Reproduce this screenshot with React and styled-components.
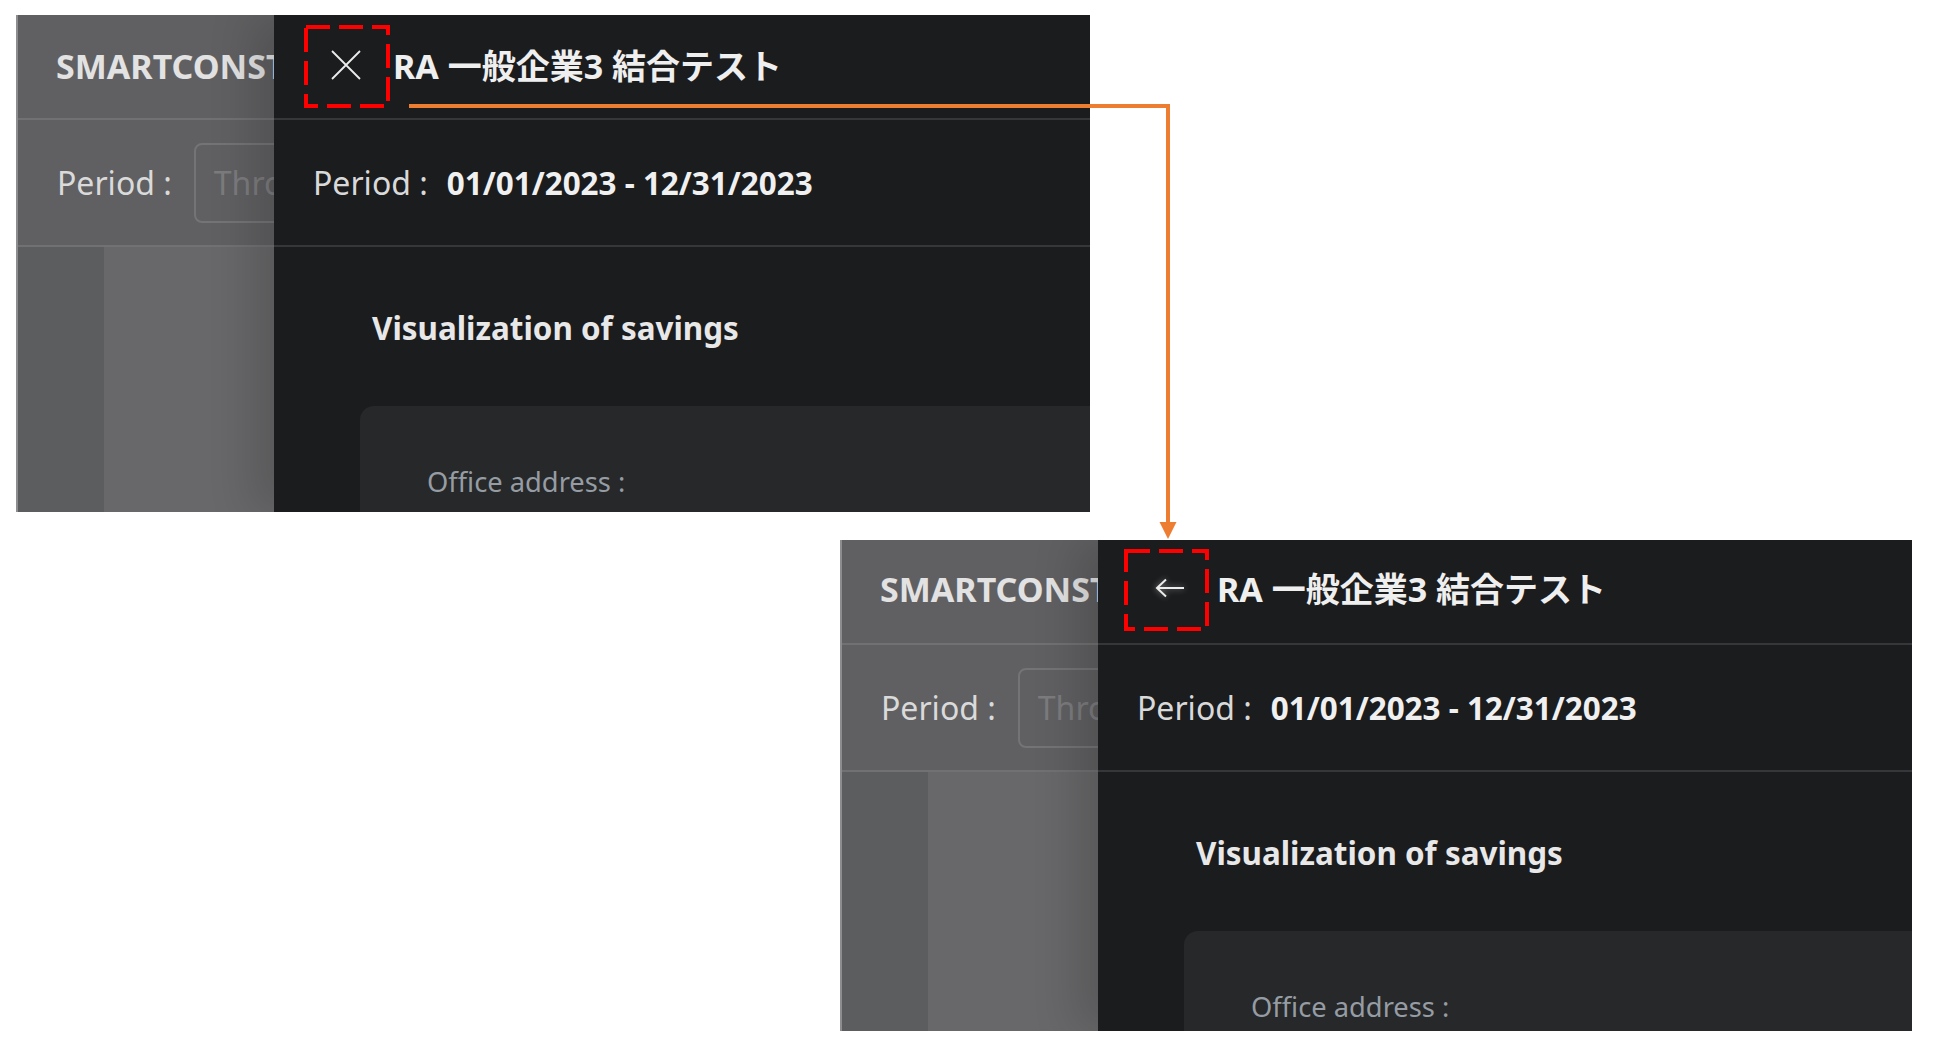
import React from "react";
import styled, { createGlobalStyle } from "styled-components";

const GlobalStyle = createGlobalStyle`
  html, body {
    margin: 0;
    padding: 0;
    background: #ffffff;
  }
  body {
    font-family: "Noto Sans", "Noto Sans CJK JP", sans-serif;
  }
`;

const FONT = `"Noto Sans", "Noto Sans CJK JP", sans-serif`;

const Page = styled.div`
  position: relative;
  width: 1939px;
  height: 1057px;
  box-sizing: border-box;
  padding: 15px 0 0 16px;
  display: flex;
  flex-direction: column;
  align-items: flex-start;
  overflow: hidden;
`;

const Shot = styled.div`
  position: relative;
  width: ${(p) => p.$w}px;
  height: ${(p) => p.$h}px;
  margin-left: ${(p) => p.$left || 0}px;
  margin-top: ${(p) => p.$top || 0}px;
  overflow: hidden;
  border-left: 2px solid #8d8d8f;
  box-sizing: border-box;
  background: #606062;
  font-family: ${FONT};
`;

/* ---------- the page behind the drawer ---------- */

const Behind = styled.div`
  display: flex;
  flex-direction: column;
  height: 100%;
`;

const BehindHeader = styled.div`
  height: 105px;
  box-sizing: border-box;
  padding-bottom: ${(p) => p.$lift}px;
  flex: none;
  display: flex;
  align-items: center;
  padding-left: 38px;
  border-bottom: 2px solid #717173;
  color: #e2e2e2;
  font-size: 34px;
  font-weight: 700;
  white-space: nowrap;
`;

const BehindPeriod = styled.div`
  height: 125px;
  flex: none;
  display: flex;
  align-items: center;
  gap: 22px;
  padding-left: 39px;
  border-bottom: 2px solid #717173;
  color: #dadada;
  font-size: 32px;
  white-space: nowrap;
`;

const FakeInput = styled.div`
  height: 80px;
  width: 320px;
  box-sizing: border-box;
  border: 2px solid #747476;
  border-radius: 8px;
  display: flex;
  align-items: center;
  padding-left: 18px;
  color: #7c7c7e;
  font-size: 32px;
`;

const BehindBody = styled.div`
  flex: 1;
  display: flex;
`;

const SideStrip = styled.div`
  width: 86px;
  background: #5c5d5f;
`;

const MainArea = styled.div`
  flex: 1;
  background: #68686a;
`;

/* ---------- the drawer ---------- */

const Drawer = styled.div`
  position: absolute;
  top: 0;
  bottom: 0;
  left: 256px;
  right: 0;
  background: #1b1c1e;
  box-shadow: -24px 0 40px rgba(0, 0, 0, 0.14);
  display: flex;
  flex-direction: column;
`;

const DrawerHeader = styled.div`
  position: relative;
  height: 105px;
  box-sizing: border-box;
  padding-bottom: ${(p) => p.$lift}px;
  flex: none;
  display: flex;
  align-items: center;
  padding-left: 56px;
  gap: 31px;
  border-bottom: 2px solid #36373a;
`;

const IconButton = styled.div`
  width: 32px;
  height: 32px;
  display: flex;
  align-items: center;
  justify-content: center;
  color: #ececec;
  filter: ${(p) => (p.$glow ? "drop-shadow(0 0 3px rgba(255,255,255,0.45))" : "none")};
`;

const Title = styled.div`
  color: #efefef;
  font-size: 34px;
  font-weight: 700;
  white-space: nowrap;
`;

const PeriodRow = styled.div`
  height: 125px;
  flex: none;
  display: flex;
  align-items: center;
  padding-left: 39px;
  border-bottom: 2px solid #36373a;
  white-space: nowrap;
`;

const PeriodLabel = styled.span`
  color: #d9d9d9;
  font-size: 32px;
`;

const PeriodValue = styled.span`
  margin-left: 19px;
  color: #f0f0f0;
  font-size: 31.4px;
  font-weight: 700;
`;

const Content = styled.div`
  flex: 1;
  padding-left: 86px;
  display: flex;
  flex-direction: column;
`;

const SectionTitle = styled.div`
  margin-top: 59px;
  padding-left: 12px;
  line-height: 44px;
  color: #e8e8e8;
  font-size: 31.4px;
  font-weight: 700;
`;

const Card = styled.div`
  margin-top: 56px;
  flex: 1;
  background: #27282a;
  border-radius: 14px 0 0 0;
  padding: 58px 0 0 67px;
`;

const FieldLabel = styled.div`
  line-height: 36px;
  color: #959ca3;
  font-size: 27.3px;
`;

/* ---------- annotations ---------- */

const Marker = styled.svg`
  position: absolute;
  left: ${(p) => p.$x}px;
  top: ${(p) => p.$y}px;
  overflow: visible;
`;

const Connector = styled.svg`
  position: absolute;
  left: 0;
  top: 0;
  pointer-events: none;
`;

const CloseIcon = () => (
  <svg width="30" height="30" viewBox="0 0 30 30">
    <path d="M1 1 L29 29 M29 1 L1 29" stroke="currentColor" strokeWidth="1.8" fill="none" />
  </svg>
);

const BackIcon = () => (
  <svg width="32" height="20" viewBox="0 0 32 20">
    <path
      d="M3 10 H30 M12 1.5 L3 10 L12 18.5"
      stroke="currentColor"
      strokeWidth="2"
      fill="none"
      strokeLinejoin="miter"
    />
  </svg>
);

function DashedBox({ x, y, w, h }) {
  return (
    <Marker $x={x} $y={y} width={w} height={h}>
      <rect
        x="2"
        y="2"
        width={w - 4}
        height={h - 4}
        fill="none"
        stroke="#ff0000"
        strokeWidth="4"
        strokeDasharray="24 9"
      />
    </Marker>
  );
}

function Screenshot({ w, h, left, top, icon, box, lift }) {
  return (
    <Shot $w={w} $h={h} $left={left} $top={top}>
      <Behind>
        <BehindHeader $lift={lift}>SMARTCONSTRA 一般企業3 結合テスト</BehindHeader>
        <BehindPeriod>
          Period :<FakeInput>Through the year</FakeInput>
        </BehindPeriod>
        <BehindBody>
          <SideStrip />
          <MainArea />
        </BehindBody>
      </Behind>
      <Drawer>
        <DrawerHeader $lift={lift}>
          <IconButton $glow={icon === "back"}>
            {icon === "back" ? <BackIcon /> : <CloseIcon />}
          </IconButton>
          <Title>RA 一般企業3 結合テスト</Title>
          <DashedBox {...box} />
        </DrawerHeader>
        <PeriodRow>
          <PeriodLabel>Period :</PeriodLabel>
          <PeriodValue>01/01/2023 - 12/31/2023</PeriodValue>
        </PeriodRow>
        <Content>
          <SectionTitle>Visualization of savings</SectionTitle>
          <Card>
            <FieldLabel>Office address :</FieldLabel>
          </Card>
        </Content>
      </Drawer>
    </Shot>
  );
}

export default function App() {
  return (
    <>
      <GlobalStyle />
      <Page>
        <Screenshot
          w={1074}
          h={497}
          lift={4}
          icon="close"
          box={{ x: 30, y: 10, w: 86, h: 83 }}
        />
        <Screenshot
          w={1072}
          h={491}
          left={824}
          top={28}
          lift={8}
          icon="back"
          box={{ x: 26, y: 9, w: 85, h: 82 }}
        />
        <Connector width="1939" height="1057" viewBox="0 0 1939 1057">
          <path d="M409 106 H1168 V524" stroke="#ed7d31" strokeWidth="4" fill="none" />
          <polygon points="1159.5,522 1176.5,522 1168,539" fill="#ed7d31" />
        </Connector>
      </Page>
    </>
  );
}
